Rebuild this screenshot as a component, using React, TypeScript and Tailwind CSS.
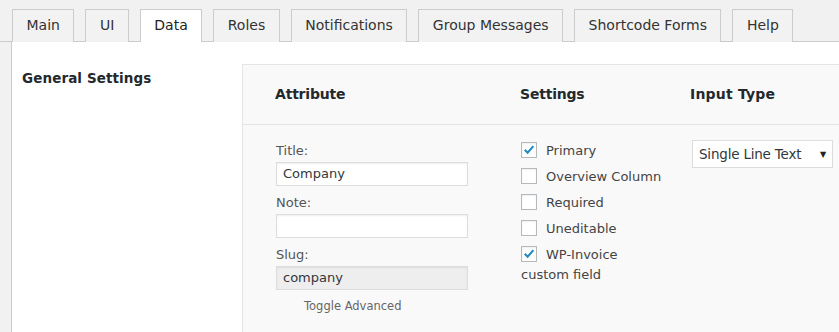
import React from "react";

const tabs = ["Main", "UI", "Data", "Roles", "Notifications", "Group Messages", "Shortcode Forms", "Help"];

function Check({ checked }: { checked?: boolean }) {
  return (
    <span className="inline-flex items-center justify-center w-[16px] h-[16px] border border-[#b4b9be] bg-white shadow-[inset_0_1px_2px_rgba(0,0,0,0.07)] align-[-3px] mr-[9px]">
      {checked && (
        <svg width="16" height="16" viewBox="0 0 16 16">
          <path d="M3.2 7.8 L6.4 11.2 L13 3.6" fill="none" stroke="#1e8cbe" strokeWidth="2.4" strokeLinejoin="miter" />
        </svg>
      )}
    </span>
  );
}

export default function App() {
  const font = { fontFamily: '"DejaVu Sans", Verdana, sans-serif' };
  return (
    <div className="w-[839px] h-[332px] bg-[#f1f1f1] overflow-hidden text-[#444]" style={font}>
      <div className="pl-[12px] pt-[9px] flex gap-[11px] border-b border-[#ccc] h-[42px]">
        {tabs.map((t) => (
          <div
            key={t}
            className={
              "h-[33px] px-[13.5px] border border-b-0 border-[#ccc] text-[14px] leading-[30px] " +
              (t === "Data" ? "bg-white text-[#222] relative z-10" : "bg-[#f2f2f2] text-[#333]")
            }
          >
            {t}
          </div>
        ))}
      </div>
      <div className="ml-[11px] border-l border-[#ccc] bg-white h-[290px] flex">
        <div className="w-[230px] pl-[10px] pt-[26px] text-[13.5px] font-bold text-[#23282d] tracking-[0.1px]">
          General Settings
        </div>
        <div className="flex-1 mt-[22px] bg-[#f9f9f9] border-l border-t border-[#e5e5e5]">
          <div className="h-[60px] border-b border-[#e5e5e5] flex items-center pl-[32px] text-[14px] font-bold text-[#23282d] tracking-[-0.2px]">
            <div className="w-[245px]">Attribute</div>
            <div className="w-[170px]">Settings</div>
            <div className="tracking-[0.2px]">Input Type</div>
          </div>
          <div className="flex pl-[33px] pt-[16px]">
            <div className="w-[245px] text-[13px] pt-[1px]">
              {[
                { l: "Title:", v: "Company", bg: "bg-white" },
                { l: "Note:", v: "", bg: "bg-white" },
                { l: "Slug:", v: "company", bg: "bg-[#eeeeee]" },
              ].map((f) => (
                <div key={f.l} className="mb-[8px]">
                  <div className="h-[18px] leading-[18px] mb-[2px] text-[#555]">{f.l}</div>
                  <div
                    className={
                      "w-[192px] h-[24px] border border-[#ddd] leading-[22px] px-[6px] text-[#32373c] shadow-[inset_0_1px_2px_rgba(0,0,0,0.07)] " +
                      f.bg
                    }
                  >
                    {f.v}
                  </div>
                </div>
              ))}
              <div className="pl-[28px] -mt-[1px] text-[11.5px] text-[#666] leading-[18px]">Toggle Advanced</div>
            </div>
            <div className="w-[170px] text-[13px] text-[#444]">
              <div className="w-[140px]">
                <div className="leading-[20px] mb-[6px]"><Check checked />Primary</div>
                <div className="leading-[20px] mb-[6px] whitespace-nowrap"><Check />Overview Column</div>
                <div className="leading-[20px] mb-[6px]"><Check />Required</div>
                <div className="leading-[20px] mb-[6px]"><Check />Uneditable</div>
                <div className="leading-[20px] mb-[6px]"><Check checked />WP-Invoice custom field</div>
              </div>
            </div>
            <div className="-mt-[1px]">
              <div className="ml-[1px] w-[141px] h-[28px] border border-[#ddd] bg-white flex items-center pl-[6px] text-[13.5px] tracking-[-0.2px] text-[#32373c] relative">
                Single Line Text
                <span className="absolute right-[6px] top-[8px] text-[8px] text-[#222]">▼</span>
              </div>
            </div>
          </div>
        </div>
      </div>
    </div>
  );
}
